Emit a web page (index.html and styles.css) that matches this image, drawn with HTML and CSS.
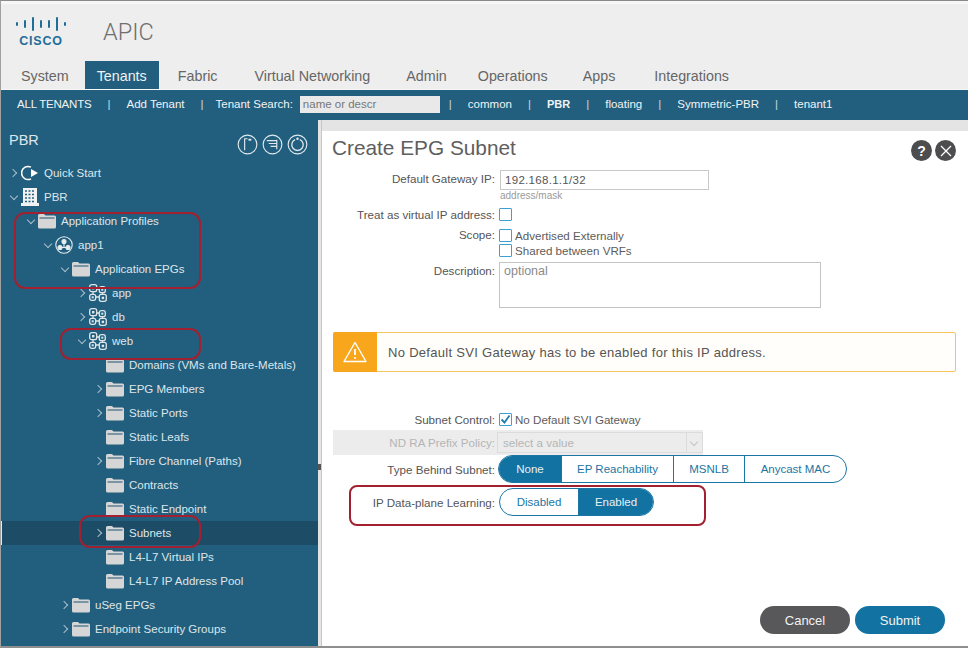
FILE: index.html
```html
<!DOCTYPE html>
<html lang="en">
<head>
    <meta charset="UTF-8">
    <meta name="viewport" content="width=device-width, initial-scale=1.0">
    <title>APIC - Create EPG Subnet</title>
    <link rel="stylesheet" href="styles.css">
</head>
<body>
    <svg class="icon-defs" width="0" height="0">
        <symbol id="i-folder" viewBox="0 0 18 16">
            <path d="M0 2.5 Q0 1 1.5 1 H6 L7.5 2.5 H16.5 Q18 2.5 18 4 V14 Q18 15.500 16.500 15.500 H1.500 Q0 15.500 0 14 Z" fill="#d6d6d6"/>
            <path d="M1.500 5 H16.500" stroke="#3b6a85" stroke-width="1.200"/>
        </symbol>
        <symbol id="i-epg" viewBox="0 0 18 18" fill="none" stroke="#dfe6ea" stroke-width="1.300">
            <rect x="0.700" y="0.700" width="7" height="7" rx="2"/>
            <rect x="10.300" y="2.700" width="6" height="6" rx="2"/>
            <rect x="0.700" y="10.300" width="6" height="6" rx="2"/>
            <rect x="10.300" y="10.300" width="7" height="7" rx="2"/>
            <path d="M7.700 5 H10.300 M4 7.700 V10.300 M13.500 8.700 V10.300 M6.700 13 H10.300"/>
            <rect x="3" y="3" width="2.400" height="2.400" fill="#dfe6ea" stroke="none"/>
            <rect x="12.300" y="4.700" width="2" height="2" fill="#dfe6ea" stroke="none"/>
            <rect x="2.700" y="12.300" width="2" height="2" fill="#dfe6ea" stroke="none"/>
            <rect x="12.700" y="12.700" width="2.400" height="2.400" fill="#dfe6ea" stroke="none"/>
        </symbol>
    </svg>

    <div class="frame">
        <header class="top">
            <div class="logo">
                <svg class="logo-bars" width="50" height="14" viewBox="0 0 50 14" fill="none" stroke="#1f6d99" stroke-width="2" stroke-linecap="round">
                    <path d="M1 6 V8 M9 4 V10 M17 1 V13 M25 4 V10 M33 4 V10 M41 1 V13 M49 6 V8"/>
                </svg>
                <span class="logo-text">CISCO</span>
            </div>
            <span class="product">APIC</span>
        </header>

        <nav class="tabs">
            <a class="tab tab-system">System</a>
            <a class="tab tab-active">Tenants</a>
            <a class="tab tab-fabric">Fabric</a>
            <a class="tab tab-virtual">Virtual Networking</a>
            <a class="tab tab-admin">Admin</a>
            <a class="tab tab-ops">Operations</a>
            <a class="tab tab-apps">Apps</a>
            <a class="tab tab-integ">Integrations</a>
        </nav>

        <div class="subnav">
            <span class="all-tenants">ALL TENANTS</span><i>|</i>
            <span>Add Tenant</span><i>|</i>
            <label class="search">Tenant Search: <span class="search-box">name or descr</span></label><i class="sep-tight">|</i>
            <span>common</span><i>|</i>
            <b>PBR</b><i>|</i>
            <span>floating</span><i>|</i>
            <span>Symmetric-PBR</span><i>|</i>
            <span>tenant1</span>
        </div>

        <div class="main">
            <aside class="side">
                <div class="side-head">
                    <span class="side-title">PBR</span>
                    <div class="side-tools">
                        <svg width="21" height="21" viewBox="0 0 22 22" fill="none" stroke="#dfe9ee" stroke-width="1.200"><circle cx="11" cy="11" r="9.800"/><path d="M8 17 V5 H11"/><path d="M12 5 h3 v2 h-3 z" fill="#dfe9ee" stroke="none"/></svg>
                        <svg width="21" height="21" viewBox="0 0 22 22" fill="none" stroke="#dfe9ee" stroke-width="1.200"><circle cx="11" cy="11" r="9.800"/><path d="M5 7 H15 M7 10 H15 M9 13 H15 M15.500 6 V16"/></svg>
                        <svg width="21" height="21" viewBox="0 0 22 22" fill="none" stroke="#dfe9ee" stroke-width="1.200"><circle cx="11" cy="11" r="9.800"/><path d="M8.500 5.800 A6 6 0 1 0 13.500 5.800" stroke-width="1.400"/><circle cx="11" cy="5" r="1.300" fill="#dfe9ee" stroke="none"/></svg>
                    </div>
                </div>

                <ul class="tree">
                    <li class="row d0"><span class="chev right"></span>
                        <svg class="ico" width="18" height="16" viewBox="0 0 18 16" fill="none" stroke="#fff" stroke-width="1.500"><path d="M10 2.200 A6.500 6.500 0 1 0 10 13.800"/><path d="M10 4 L17 8 L10 12 Z" fill="#fff" stroke="none"/></svg>
                        Quick Start</li>
                    <li class="row d0"><span class="chev down"></span>
                        <svg class="ico" width="18" height="18" viewBox="0 0 18 18"><path fill="#f2f2f2" d="M2 0 H16 V15 H18 V18 H0 V15 H2 Z"/><path stroke="#22607f" stroke-width="1.500" stroke-dasharray="2 1.500" d="M4 3 H14 M4 6.500 H14 M4 10 H14 M4 13.500 H14"/></svg>
                        PBR</li>
                    <li class="row d1"><span class="chev down"></span><svg class="ico" width="18" height="16"><use href="#i-folder"/></svg>Application Profiles</li>
                    <li class="row d2"><span class="chev down"></span>
                        <svg class="ico" width="18" height="18" viewBox="0 0 18 18" fill="none" stroke="#e6ecef" stroke-width="1.100"><circle cx="9" cy="9" r="8.200"/><circle cx="9" cy="5.500" r="2" fill="#e6ecef"/><circle cx="5" cy="11.500" r="2" fill="#e6ecef"/><circle cx="13" cy="11.500" r="2" fill="#e6ecef"/><path d="M9 7.500 V11.500 H5 M9 11.500 H13"/></svg>
                        app1</li>
                    <li class="row d3"><span class="chev down"></span><svg class="ico" width="18" height="16"><use href="#i-folder"/></svg>Application EPGs</li>
                    <li class="row d4"><span class="chev right"></span><svg class="ico" width="18" height="18"><use href="#i-epg"/></svg>app</li>
                    <li class="row d4"><span class="chev right"></span><svg class="ico" width="18" height="18"><use href="#i-epg"/></svg>db</li>
                    <li class="row d4"><span class="chev down"></span><svg class="ico" width="18" height="18"><use href="#i-epg"/></svg>web</li>
                    <li class="row d5"><span class="chev"></span><svg class="ico" width="18" height="16"><use href="#i-folder"/></svg>Domains (VMs and Bare-Metals)</li>
                    <li class="row d5"><span class="chev right"></span><svg class="ico" width="18" height="16"><use href="#i-folder"/></svg>EPG Members</li>
                    <li class="row d5"><span class="chev right"></span><svg class="ico" width="18" height="16"><use href="#i-folder"/></svg>Static Ports</li>
                    <li class="row d5"><span class="chev"></span><svg class="ico" width="18" height="16"><use href="#i-folder"/></svg>Static Leafs</li>
                    <li class="row d5"><span class="chev right"></span><svg class="ico" width="18" height="16"><use href="#i-folder"/></svg>Fibre Channel (Paths)</li>
                    <li class="row d5"><span class="chev"></span><svg class="ico" width="18" height="16"><use href="#i-folder"/></svg>Contracts</li>
                    <li class="row d5"><span class="chev"></span><svg class="ico" width="18" height="16"><use href="#i-folder"/></svg>Static Endpoint</li>
                    <li class="row d5 selected"><span class="chev right"></span><svg class="ico" width="18" height="16"><use href="#i-folder"/></svg>Subnets</li>
                    <li class="row d5"><span class="chev"></span><svg class="ico" width="18" height="16"><use href="#i-folder"/></svg>L4-L7 Virtual IPs</li>
                    <li class="row d5"><span class="chev"></span><svg class="ico" width="18" height="16"><use href="#i-folder"/></svg>L4-L7 IP Address Pool</li>
                    <li class="row d3"><span class="chev right"></span><svg class="ico" width="18" height="16"><use href="#i-folder"/></svg>uSeg EPGs</li>
                    <li class="row d3"><span class="chev right"></span><svg class="ico" width="18" height="16"><use href="#i-folder"/></svg>Endpoint Security Groups</li>
                </ul>

                <div class="mark mark-profiles"></div>
                <div class="mark mark-web"></div>
                <div class="mark mark-subnets"></div>
            </aside>

            <div class="splitter"><span class="grip"></span></div>

            <section class="content">
                <div class="strip"></div>
                <div class="dialog">
                    <div class="dialog-head">
                        <h1>Create EPG Subnet</h1>
                        <div class="dialog-btns">
                            <span class="round">?</span>
                            <span class="round">
                                <svg width="12" height="12" viewBox="0 0 12 12" stroke="#fff" stroke-width="1.300"><path d="M1 1 L11 11 M11 1 L1 11"/></svg>
                            </span>
                        </div>
                    </div>

                    <div class="form">
                        <div class="field field-ip">
                            <span class="lbl">Default Gateway IP:</span>
                            <div>
                                <div class="input">192.168.1.1/32</div>
                                <div class="hint">address/mask</div>
                            </div>
                        </div>
                        <div class="field field-virtual">
                            <span class="lbl">Treat as virtual IP address:</span>
                            <span class="check"></span>
                        </div>
                        <div class="field field-scope">
                            <span class="lbl">Scope:</span>
                            <div>
                                <div class="opt"><span class="check"></span>Advertised Externally</div>
                                <div class="opt"><span class="check"></span>Shared between VRFs</div>
                            </div>
                        </div>
                        <div class="field field-desc">
                            <span class="lbl">Description:</span>
                            <div class="textarea">optional</div>
                        </div>
                    </div>

                    <div class="alert">
                        <div class="alert-icon">
                            <svg width="24" height="22" viewBox="0 0 24 22" fill="none" stroke="#fff" stroke-width="1.400" stroke-linejoin="round"><path d="M12 1.500 L23 20.500 H1 Z"/><path d="M12 8 V14" stroke-width="1.800"/><circle cx="12" cy="17" r="1" fill="#fff" stroke="none"/></svg>
                        </div>
                        <span class="alert-text">No Default SVI Gateway has to be enabled for this IP address.</span>
                    </div>

                    <div class="form form-lower">
                        <div class="field field-control">
                            <span class="lbl">Subnet Control:</span>
                            <div class="opt"><span class="check checked">
                                <svg width="11" height="11" viewBox="0 0 11 11" fill="none" stroke="#1b7fb0" stroke-width="1.800"><path d="M1.500 5.500 L4.500 8.500 L9.500 1.500"/></svg>
                            </span>No Default SVI Gateway</div>
                        </div>
                        <div class="field field-nd">
                            <span class="lbl">ND RA Prefix Policy:</span>
                            <div class="select">select a value<span class="select-arrow"><span class="chev-sm"></span></span></div>
                        </div>
                        <div class="field field-type">
                            <span class="lbl">Type Behind Subnet:</span>
                            <div class="seg">
                                <span class="seg-on seg-none">None</span>
                                <span class="seg-ep">EP Reachability</span>
                                <span class="seg-ms">MSNLB</span>
                                <span class="seg-any">Anycast MAC</span>
                            </div>
                        </div>
                        <div class="field field-learn">
                            <span class="lbl">IP Data-plane Learning:</span>
                            <div class="seg">
                                <span class="seg-dis">Disabled</span>
                                <span class="seg-on seg-en">Enabled</span>
                            </div>
                        </div>
                    </div>

                    <div class="dialog-foot">
                        <button class="btn btn-cancel">Cancel</button>
                        <button class="btn btn-submit">Submit</button>
                    </div>

                    <div class="mark mark-learn"></div>
                </div>
            </section>
        </div>
    </div>
</body>
</html>
```

FILE: styles.css
```css
* {
    box-sizing: border-box;
}
html, body {
    margin: 0;
    padding: 0;
}
body {
    width: 968px;
    height: 648px;
    overflow: hidden;
    background-color: #ffffff;
    font-family: "Liberation Sans", Arial, sans-serif;
    color: #555555;
}
.icon-defs {
    position: absolute;
}
.frame {
    height: 648px;
    display: flex;
    flex-direction: column;
    background-color: #eeeeee;
    border-top: 1px solid #8a8a8a;
    border-left: 1px solid #a0a0a0;
    border-bottom: 2px solid #8f8f8f;
}

/* header */
.top {
    height: 60px;
    flex: none;
    display: flex;
    padding: 13px 0 0 15px;
    border-top: 3px solid #f7f7f7;
}
.logo {
    width: 50px;
    display: flex;
    flex-direction: column;
    align-items: center;
}
.logo-bars {
    display: block;
}
.logo-text {
    margin-top: 4px;
    font-size: 12.5px;
    font-weight: bold;
    letter-spacing: 0.8px;
    line-height: 12px;
    color: #1f6d99;
}
.product {
    margin: 1px 0 0 37px;
    font-family: "Roboto", sans-serif;
    font-weight: 300;
    font-size: 23.5px;
    line-height: 28px;
    color: #6f6f6f;
}

/* tabs */
.tabs {
    height: 29px;
    flex: none;
    display: flex;
    align-items: stretch;
    font-size: 14.3px;
    color: #666666;
    border-bottom: 1px solid #f7f7f7;
}
.tab {
    display: flex;
    align-items: center;
    padding-top: 1px;
}
.tab-system { margin-left: 20px; }
.tab-active {
    margin-left: 16px;
    padding: 1px 12px 0;
    background-color: #225f7e;
    color: #f2f2f2;
}
.tab-fabric { margin-left: 19px; }
.tab-virtual { margin-left: 37px; }
.tab-admin { margin-left: 36px; }
.tab-ops { margin-left: 31px; }
.tab-apps { margin-left: 35px; }
.tab-integ { margin-left: 39px; }

/* tenant bar */
.subnav {
    height: 30px;
    flex: none;
    display: flex;
    align-items: center;
    gap: 16px;
    padding: 0 0 2px 16px;
    background-color: #225f7e;
    color: #f0f3f5;
    font-size: 11.5px;
}
.subnav i {
    font-style: normal;
    opacity: 0.8;
}
.subnav b {
    font-size: 11px;
}
.all-tenants {
    letter-spacing: -0.2px;
}
.subnav .sep-tight {
    margin-left: -7px;
}
.search {
    display: flex;
    align-items: center;
    gap: 5px;
    margin-left: -4px;
}
.search-box {
    width: 140px;
    height: 17px;
    margin-left: 2px;
    padding-left: 3px;
    line-height: 17px;
    background-color: #e9e9e9;
    color: #777777;
}

/* main split */
.main {
    flex: 1;
    min-height: 0;
    display: flex;
}
.side {
    position: relative;
    width: 317px;
    flex: none;
    background-color: #225f7e;
    color: #dfe6ea;
}
.side-head {
    height: 41px;
    display: flex;
    justify-content: space-between;
    padding: 12px 10px 0 8px;
}
.side-title {
    font-size: 14.5px;
    line-height: 17px;
}
.side-tools {
    display: flex;
    gap: 4px;
    margin-top: 2px;
}
.tree {
    list-style: none;
    margin: 0;
    padding: 0;
}
.row {
    height: 24px;
    display: flex;
    align-items: center;
    font-size: 11.5px;
    white-space: nowrap;
}
.d0 { padding-left: 9px; }
.d1 { padding-left: 26px; }
.d2 { padding-left: 43px; }
.d3 { padding-left: 60px; }
.d4 { padding-left: 77px; }
.d5 { padding-left: 94px; }
.selected {
    background-color: #1c4c66;
    box-shadow: inset 1px 0 0 #e8e8e8;
}
.chev {
    width: 11px;
    height: 8px;
    flex: none;
    position: relative;
}
.chev::after {
    content: "";
    position: absolute;
    width: 5px;
    height: 5px;
    border-right: 1px solid #a9bdc9;
    border-bottom: 1px solid #a9bdc9;
}
.chev:not(.right):not(.down)::after {
    display: none;
}
.chev.right::after {
    left: 0;
    top: 1px;
    transform: rotate(-45deg);
}
.chev.down::after {
    left: 1px;
    top: 0;
    transform: rotate(45deg);
}
.ico {
    flex: none;
    margin-right: 5px;
}
.mark {
    position: absolute;
    border: 2px solid #a2202f;
    border-radius: 11px;
    pointer-events: none;
}
.mark-profiles { left: 13px; top: 92px; width: 187px; height: 77px; }
.mark-web { left: 59px; top: 208px; width: 141px; height: 32px; }
.mark-subnets { left: 78px; top: 395px; width: 122px; height: 33px; }

.splitter {
    width: 4px;
    flex: none;
    display: flex;
    align-items: center;
    background-color: #e4e4e4;
    border-right: 1px solid #c8c8c8;
}
.grip {
    width: 3px;
    height: 6px;
    margin-top: 168px;
    background-color: #555555;
}

/* dialog */
.content {
    flex: 1;
    min-width: 0;
    display: flex;
    flex-direction: column;
}
.strip {
    height: 11px;
    flex: none;
    background-color: #e4e4e4;
}
.dialog {
    position: relative;
    flex: 1;
    display: flex;
    flex-direction: column;
    background-color: #ffffff;
    padding: 0 12px 12px 10px;
}
.dialog-head {
    height: 39px;
    flex: none;
    display: flex;
    justify-content: space-between;
    align-items: center;
}
h1 {
    margin: -5px 0 0;
    font-weight: normal;
    font-size: 20.8px;
    color: #5e5e5e;
}
.dialog-btns {
    display: flex;
    gap: 3px;
}
.round {
    width: 21px;
    height: 21px;
    border-radius: 50%;
    display: flex;
    align-items: center;
    justify-content: center;
    background-color: #4d4d4f;
    color: #ffffff;
    font-size: 14px;
    font-weight: bold;
}
.form {
    font-size: 11.6px;
}
.field {
    display: grid;
    grid-template-columns: 163px auto;
    column-gap: 5px;
    justify-content: start;
}
.lbl {
    text-align: right;
    color: #555555;
    white-space: nowrap;
}
.field-ip .lbl {
    line-height: 17px;
}
.input {
    width: 209px;
    height: 20px;
    padding-left: 4px;
    line-height: 18px;
    border: 1px solid #c9c9c9;
    font-size: 11.5px;
    color: #555555;
    letter-spacing: 0.3px;
}
.hint {
    font-size: 10px;
    line-height: 11px;
    color: #9a9a9a;
}
.field-virtual {
    margin-top: 7px;
    line-height: 13px;
}
.check {
    display: inline-block;
    position: relative;
    width: 13px;
    height: 13px;
    flex: none;
    margin-left: -1px;
    border: 1.5px solid #3fa0cf;
    border-radius: 1px;
}
.check svg {
    position: absolute;
    left: -0.500px;
    top: -0.500px;
}
.field-scope {
    margin-top: 7px;
}
.field-scope .lbl {
    line-height: 13px;
}
.opt {
    display: flex;
    align-items: center;
    gap: 3px;
    height: 15px;
    color: #5c5c5c;
}
.field-desc {
    margin-top: 4px;
}
.field-desc .lbl {
    padding-top: 2px;
}
.textarea {
    width: 322px;
    height: 46px;
    margin-left: -1px;
    padding: 1px 4px;
    border: 1px solid #c4c4c4;
    font-size: 12.5px;
    color: #8a8a8a;
}
.alert {
    height: 40px;
    flex: none;
    margin: 24px 0 0 1px;
    display: flex;
    align-items: center;
    background-color: #fffefa;
    border: 1px solid #f5c25e;
    border-radius: 2px;
}
.alert-icon {
    width: 44px;
    height: 40px;
    margin: 0 0 0 -1px;
    flex: none;
    display: flex;
    align-items: center;
    justify-content: center;
    background-color: #f8a61c;
    border-radius: 2px 0 0 2px;
}
.alert-text {
    margin-left: 11px;
    font-size: 13px;
    letter-spacing: 0.3px;
    color: #555555;
}
.form-lower {
    margin-top: 40px;
}
.field-control .lbl {
    line-height: 15px;
}
.field-nd {
    grid-template-columns: 162px auto;
    margin: 3px 0 0 1px;
    width: 370px;
    height: 25px;
    align-items: center;
    background-color: #ececec;
}
.field-nd .lbl {
    color: #b5b5b5;
}
.select {
    width: 206px;
    height: 21px;
    margin-left: -3px;
    position: relative;
    padding-left: 5px;
    line-height: 20px;
    border: 1px solid #dcdcdc;
    color: #b5b5b5;
}
.select-arrow {
    position: absolute;
    right: 0;
    top: 0;
    bottom: 0;
    width: 16px;
    border-left: 1px solid #dcdcdc;
}
.chev-sm {
    position: absolute;
    left: 4px;
    top: 6px;
    width: 6px;
    height: 6px;
    border-right: 1px solid #c4c4c4;
    border-bottom: 1px solid #c4c4c4;
    transform: rotate(45deg);
}
.field-type {
    align-items: center;
}
.seg {
    display: flex;
    height: 28px;
    margin-left: -2px;
    border: 1px solid #1b76a4;
    border-radius: 14px;
    overflow: hidden;
    color: #1b76a4;
    font-size: 11.5px;
}
.seg span {
    display: flex;
    align-items: center;
    justify-content: center;
    border-left: 1px solid #1b76a4;
}
.seg span:first-child {
    border-left: 0;
}
.seg .seg-on {
    background-color: #1272a1;
    color: #e8f1f6;
}
.seg-none { width: 62px; }
.seg-ep { width: 112px; }
.seg-ms { width: 71px; }
.seg-any { width: 102px; }
.field-learn {
    margin-top: 5px;
    align-items: center;
}
.field-learn .seg {
    margin-left: -1px;
}
.seg-dis { width: 78px; }
.seg-en { width: 75px; }
.dialog-foot {
    margin-top: auto;
    display: flex;
    justify-content: flex-end;
    gap: 5px;
    padding-right: 11px;
}
.btn {
    width: 90px;
    height: 28px;
    border: 0;
    border-radius: 14px;
    font-family: inherit;
    font-size: 13px;
    color: #f2f2f2;
}
.btn-cancel {
    background-color: #58585a;
}
.btn-submit {
    background-color: #1272a1;
}
.mark-learn {
    left: 27px;
    top: 354px;
    width: 357px;
    height: 41px;
    border-radius: 8px;
}
```
